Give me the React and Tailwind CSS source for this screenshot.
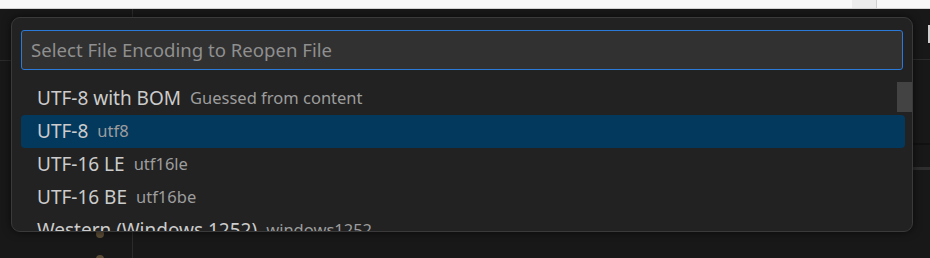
const rows = [
  { label: "UTF-8 with BOM", desc: "Guessed from content" },
  { label: "UTF-8", desc: "utf8", selected: true },
  { label: "UTF-16 LE", desc: "utf16le" },
  { label: "UTF-16 BE", desc: "utf16be" },
  { label: "Western (Windows 1252)", desc: "windows1252" },
];

export default function App() {
  return (
    <div
      className="relative w-[930px] h-[258px] overflow-hidden bg-[#181818]"
      style={{ fontFamily: '"Noto Sans", "Open Sans", sans-serif' }}
    >
      {/* title strip */}
      <div className="flex h-[9px] border-b border-[#d4d4d4] bg-[#f8f8f8]">
        <div className="flex-1" />
        <div className="w-[25px] bg-[#ececec] border-r border-[#d0d0d0]" />
        <div className="w-[53px]" />
      </div>

      {/* workbench behind the picker */}
      <div className="flex h-[249px]">
        <div className="w-[133px] border-r border-[#2b2b2b] flex flex-col">
          <div className="h-[52px] border-b border-[#2b2b2b] w-[12px]" />
          <div className="flex-1 relative">
            <span className="absolute left-[96px] top-[169px] w-[8px] h-[8px] rounded-full bg-[#5c4d36]" />
            <span className="absolute left-[96px] top-[194px] w-[8px] h-[8px] rounded-full bg-[#5c4d36]" />
          </div>
        </div>
        <div className="flex-1" />
        <div className="w-[17px] flex flex-col">
          <div className="h-[16px]" />
          <div className="h-[18px] ml-[15px] bg-[#cfcfcf]" />
          <div className="h-[17px] border-b border-[#2b2b2b]" />
          <div className="h-[85px] border-b-2 border-[#111111]" />
          <div className="h-[25px] border-b-[3px] border-[#2e2e2e]" />
        </div>
      </div>

      {/* quick pick */}
      <div className="absolute left-[11px] top-[17px] w-[902px] h-[215px] rounded-[9px] border border-[#3a3a3a] bg-[#222222] shadow-[0_0_8px_rgba(0,0,0,0.6)] overflow-hidden">
        <div className="pt-[12px] pl-[9px] pr-[9px]">
          <div className="h-[40px] rounded-[3px] border border-[#2b79d8] bg-[#313131] flex items-center pl-[9px] text-[18.6px] text-[#8f8f8f]">
            Select File Encoding to Reopen File
          </div>
        </div>
        <div className="relative mt-[12px]">
          {rows.map((r) => (
            <div
              key={r.label}
              className={
                r.selected
                  ? "ml-[9px] mr-[7px] h-[33px] flex items-center pl-[16px] rounded-[4px] bg-[#04395e]"
                  : "ml-[9px] mr-[7px] h-[33px] flex items-center pl-[16px] rounded-[4px]"
              }
            >
              <span className="text-[19px] text-[#cccccc] whitespace-nowrap">
                {r.label}
              </span>
              <span className="ml-[9px] text-[16.5px] text-[#9d9d9d] whitespace-nowrap">
                {r.desc}
              </span>
            </div>
          ))}
          <div className="absolute right-0 top-0 w-[15px] h-[30px] bg-[#434343]" />
        </div>
      </div>
    </div>
  );
}
